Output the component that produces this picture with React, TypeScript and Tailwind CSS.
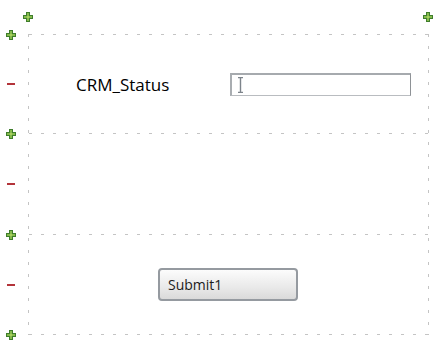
import React from 'react';

const Plus: React.FC<{ className?: string }> = ({ className = '' }) => (
  <svg width="10" height="10" viewBox="0 0 10 10" className={`block shrink-0 ${className}`}>
    <polygon points="3,0 7,0 7,3 10,3 10,7 7,7 7,10 3,10 3,7 0,7 0,3 3,3" fill="#3f7d2c" />
    <polygon points="4,1 6,1 6,4 9,4 9,6 6,6 6,9 4,9 4,6 1,6 1,4 4,4" fill="#86bb4c" />
    <rect x="4" y="4" width="2" height="2" fill="#a8cf5e" />
  </svg>
);

const Minus: React.FC = () => <div className="ml-[7px] h-[2px] w-[8px] bg-[#b3343a]" />;

const HLine: React.FC = () => (
  <div className="h-px w-full shrink-0 bg-[repeating-linear-gradient(90deg,#c4c4c4_0_3px,transparent_3px_12px)]" />
);

const VLine: React.FC = () => (
  <div className="h-full w-px shrink-0 bg-[repeating-linear-gradient(180deg,#c4c4c4_0_3px,transparent_3px_12px)]" />
);

// gutter rows mirror the box rows so the icons sit on the lines
const GutterLine: React.FC = () => (
  <div className="flex h-px items-center">
    <Plus className="ml-[6px]" />
  </div>
);

const App: React.FC = () => {
  return (
    <div className="h-[344px] w-[441px] overflow-hidden bg-white pt-[12px] font-['Open_Sans',sans-serif] text-black">
      {/* top toolbar pluses */}
      <div className="flex h-[10px]">
        <Plus className="ml-[23px]" />
        <Plus className="ml-auto mr-[8px]" />
      </div>

      <div className="mt-[12px] flex h-[301px]">
        {/* gutter */}
        <div className="flex w-[28px] shrink-0 flex-col">
          <GutterLine />
          <div className="flex h-[98px] items-center">
            <Minus />
          </div>
          <GutterLine />
          <div className="flex h-[100px] items-center">
            <Minus />
          </div>
          <GutterLine />
          <div className="flex h-[99px] items-center">
            <Minus />
          </div>
          <GutterLine />
        </div>

        {/* form grid */}
        <VLine />
        <div className="flex w-[399px] flex-col">
          <HLine />
          <div className="flex h-[98px] items-center pl-[47px]">
            <div className="w-[154px] text-[17px] leading-none">CRM_Status</div>
            <div className="flex h-[23px] w-[181px] items-center border border-t-2 border-l-2 border-[#b9bcc0] border-t-[#a6aaae] border-l-[#a9adb1] border-r-[#8e9296] bg-white pl-[6px]">
              <svg width="5" height="16" viewBox="0 0 5 16" className="block">
                <path d="M0 0.5H5M0 15.5H5M2.5 0.5V15.5" stroke="#7d848b" strokeWidth="1.4" fill="none" />
              </svg>
            </div>
          </div>
          <HLine />
          <div className="h-[100px]" />
          <HLine />
          <div className="flex h-[99px] items-center pl-[129px]">
            <button className="flex h-[33px] w-[140px] items-center rounded-[4px] border-2 border-[#959aa0] bg-[linear-gradient(180deg,#fcfcfc,#e9e9e9_60%,#dadada)] pl-[8px] text-[14px] text-[#1b1b1b]">
              Submit1
            </button>
          </div>
          <HLine />
        </div>
        <VLine />
      </div>
    </div>
  );
};

export default App;
